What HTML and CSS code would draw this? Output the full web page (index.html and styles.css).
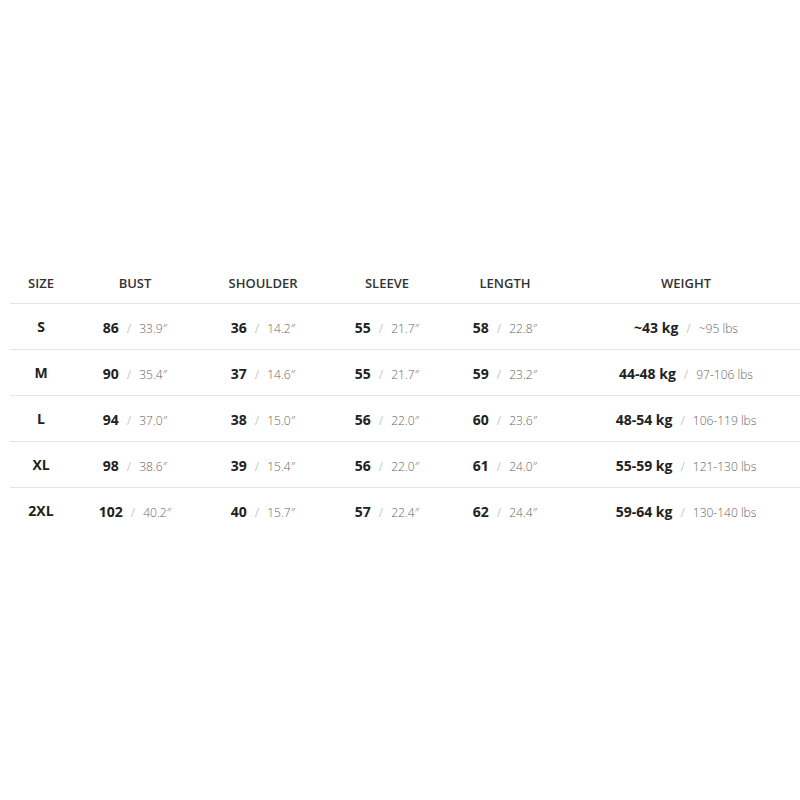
FILE: index.html
```html
<!DOCTYPE html>
<html>
<head>
<meta charset="utf-8">
<link rel="stylesheet" href="styles.css">
</head>
<body>
<div class="page">
  <table class="chart">
    <colgroup>
      <col class="c-size"><col class="c-bust"><col class="c-shoulder"><col class="c-sleeve"><col class="c-length"><col class="c-weight">
    </colgroup>
    <thead>
      <tr><th>SIZE</th><th>BUST</th><th>SHOULDER</th><th>SLEEVE</th><th>LENGTH</th><th>WEIGHT</th></tr>
    </thead>
    <tbody>
      <tr>
        <td class="size">S</td>
        <td><b>86</b><i>/</i><span>33.9″</span></td>
        <td><b>36</b><i>/</i><span>14.2″</span></td>
        <td><b>55</b><i>/</i><span>21.7″</span></td>
        <td><b>58</b><i>/</i><span>22.8″</span></td>
        <td><b>~43 kg</b><i>/</i><span>~95 lbs</span></td>
      </tr>
      <tr>
        <td class="size">M</td>
        <td><b>90</b><i>/</i><span>35.4″</span></td>
        <td><b>37</b><i>/</i><span>14.6″</span></td>
        <td><b>55</b><i>/</i><span>21.7″</span></td>
        <td><b>59</b><i>/</i><span>23.2″</span></td>
        <td><b>44-48 kg</b><i>/</i><span>97-106 lbs</span></td>
      </tr>
      <tr>
        <td class="size">L</td>
        <td><b>94</b><i>/</i><span>37.0″</span></td>
        <td><b>38</b><i>/</i><span>15.0″</span></td>
        <td><b>56</b><i>/</i><span>22.0″</span></td>
        <td><b>60</b><i>/</i><span>23.6″</span></td>
        <td><b>48-54 kg</b><i>/</i><span>106-119 lbs</span></td>
      </tr>
      <tr>
        <td class="size">XL</td>
        <td><b>98</b><i>/</i><span>38.6″</span></td>
        <td><b>39</b><i>/</i><span>15.4″</span></td>
        <td><b>56</b><i>/</i><span>22.0″</span></td>
        <td><b>61</b><i>/</i><span>24.0″</span></td>
        <td><b>55-59 kg</b><i>/</i><span>121-130 lbs</span></td>
      </tr>
      <tr>
        <td class="size">2XL</td>
        <td><b>102</b><i>/</i><span>40.2″</span></td>
        <td><b>40</b><i>/</i><span>15.7″</span></td>
        <td><b>57</b><i>/</i><span>22.4″</span></td>
        <td><b>62</b><i>/</i><span>24.4″</span></td>
        <td><b>59-64 kg</b><i>/</i><span>130-140 lbs</span></td>
      </tr>
    </tbody>
  </table>
</div>
</body>
</html>
```
FILE: styles.css
```css
html, body {
  margin: 0;
  padding: 0;
  background: #fff;
}
.page {
  padding: 263px 0 0 10px;
  font-family: "Open Sans", "Noto Sans", sans-serif;
  overflow: hidden;
}
.chart {
  border-collapse: collapse;
  table-layout: fixed;
  width: 798px;
}
.c-size { width: 62px; }
.c-bust { width: 126px; }
.c-shoulder { width: 130px; }
.c-sleeve { width: 118px; }
.c-length { width: 118px; }
.c-weight { width: 244px; }
.chart th {
  height: 40px;
  padding: 0;
  font-size: 13px;
  font-weight: 600;
  color: #333;
  text-align: center;
  vertical-align: middle;
  border-bottom: 1px solid #e6e6e6;
}
.chart td {
  height: 45px;
  padding: 0;
  text-align: center;
  vertical-align: middle;
  border-bottom: 1px solid #e6e6e6;
  white-space: nowrap;
}
.chart tbody tr:last-child td {
  border-bottom: none;
}
.chart td.size {
  font-size: 14px;
  font-weight: 700;
  color: #222;
}
.chart td b {
  font-size: 14px;
  font-weight: 700;
  color: #222;
}
.chart td i {
  font-style: normal;
  font-size: 12px;
  color: #c8c8c8;
  margin: 0 8px;
}
.chart td span {
  font-size: 12px;
  font-weight: 300;
  color: #666;
}
```
